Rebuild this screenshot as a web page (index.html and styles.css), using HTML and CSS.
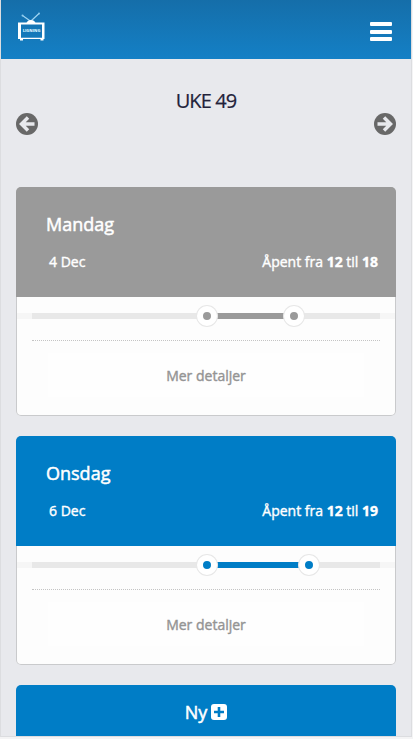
FILE: index.html
```
<!DOCTYPE html>
<html lang="no">
<head>
    <meta charset="UTF-8">
    <meta name="viewport" content="width=device-width, initial-scale=1.0">
    <title>Uke 49</title>
    <link rel="stylesheet" href="styles.css">
</head>
<body>
    <div class="screen">
        <header class="navbar">
            <svg class="logo" width="28" height="30" viewBox="0 0 28 30">
                <path d="M5.500 3.500l8.500 6M22 1.500l-7.500 7" fill="none" stroke="#9fd4f2" stroke-width="1.2"/>
                <circle cx="5.500" cy="3.500" r="1" fill="#8ccbee"/>
                <circle cx="22" cy="1.500" r="1" fill="#8ccbee"/>
                <path d="M9.500 11c1-4 8-4 9 0z" fill="#fff"/>
                <path fill="#fff" fill-rule="evenodd" d="M1 10.500h26.500V27h-1v1.500h-3V27H6v1.500H3V27H1zM4 12.500V25.800h21V12.500z"/>
            </svg>
            <span class="logo-text">LIGNING</span>
            <button class="menu" aria-label="Meny"><span></span><span></span><span></span></button>
        </header>

        <div class="week">
            <button class="arrow" aria-label="Forrige uke">
                <svg width="22" height="22" viewBox="0 0 22 22">
                    <circle cx="11" cy="11" r="11" fill="#686868"/>
                    <path d="M12 4.500L5.500 11l6.500 6.500M6 11h12.500" fill="none" stroke="#e8e9ed" stroke-width="3.500"/>
                </svg>
            </button>
            <h1>UKE 49</h1>
            <button class="arrow" aria-label="Neste uke">
                <svg width="22" height="22" viewBox="0 0 22 22">
                    <circle cx="11" cy="11" r="11" fill="#686868"/>
                    <path d="M10 4.500L16.500 11 10 17.500M16 11H3.500" fill="none" stroke="#e8e9ed" stroke-width="3.500"/>
                </svg>
            </button>
        </div>

        <div class="card closed">
            <div class="card-head">
                <h2>Mandag</h2>
                <div class="card-info">
                    <span>4 Dec</span>
                    <span>Åpent fra <b>12</b> til <b>18</b></span>
                </div>
            </div>
            <div class="card-body">
                <div class="slider">
                    <div class="track">
                        <div class="range" style="left: 50%; width: 25%"></div>
                        <div class="handle" style="left: 50%"></div>
                        <div class="handle" style="left: 75%"></div>
                    </div>
                </div>
                <button class="details">Mer detaljer</button>
            </div>
        </div>

        <div class="card">
            <div class="card-head">
                <h2>Onsdag</h2>
                <div class="card-info">
                    <span>6 Dec</span>
                    <span>Åpent fra <b>12</b> til <b>19</b></span>
                </div>
            </div>
            <div class="card-body">
                <div class="slider">
                    <div class="track">
                        <div class="range" style="left: 50%; width: 29.167%"></div>
                        <div class="handle" style="left: 50%"></div>
                        <div class="handle" style="left: 79.167%"></div>
                    </div>
                </div>
                <button class="details">Mer detaljer</button>
            </div>
        </div>

        <button class="new">
            Ny
            <svg width="16" height="16" viewBox="0 0 16 16">
                <rect width="16" height="16" rx="3" fill="#fff"/>
                <path d="M8 3v10M3 8h10" stroke="#007dc6" stroke-width="2.600"/>
            </svg>
        </button>
    </div>
</body>
</html>
```
FILE: styles.css
```
* {
    box-sizing: border-box;
}
body {
    margin: 0;
    height: 739px;
    overflow: hidden;
    background: #f4f4f5;
    font-family: "Open Sans", sans-serif;
}
button {
    padding: 0;
    border: none;
    background: none;
    font-family: inherit;
    cursor: pointer;
}
h1, h2 {
    margin: 0;
    font-weight: 400;
}
.screen {
    width: 410px;
    height: 736px;
    margin-left: 1px;
    overflow: hidden;
    background: #e8e9ed;
    box-shadow: 0 0 0 1px #dcdde0;
}
.navbar {
    position: relative;
    display: flex;
    justify-content: space-between;
    height: 59px;
    padding: 12px 19px 0 16px;
    background: linear-gradient(#156ea9, #1480c6);
}
.logo-text {
    position: absolute;
    top: 27px;
    left: 21px;
    width: 19px;
    color: #d5effc;
    font-size: 4px;
    font-weight: 800;
    line-height: 8px;
    text-align: center;
}
.menu {
    display: flex;
    flex-direction: column;
    justify-content: space-between;
    width: 22px;
    height: 19px;
    margin-top: 10px;
}
.menu span {
    height: 4px;
    border-radius: 1px;
    background: #fff;
}
.week {
    display: flex;
    justify-content: space-between;
    height: 128px;
    padding: 27px 15px 0;
}
.week h1 {
    color: #22223a;
    font-size: 20px;
    line-height: 30px;
    letter-spacing: -0.9px;
    -webkit-text-stroke: 0.2px #22223a;
}
.arrow {
    width: 22px;
    height: 22px;
    margin-top: 27px;
}
.arrow svg {
    display: block;
}
.card {
    height: 229px;
    margin: 0 15px 20px;
    border-radius: 5px;
    background: #fdfdfd;
    box-shadow: inset 0 0 0 1px #c9cacc;
    color: #007dc6;
}
.card.closed {
    color: #9a9a9a;
}
.card-head {
    height: 110px;
    padding: 24px 18px 0 30px;
    border-radius: 5px 5px 0 0;
    background: currentColor;
}
.card-head h2 {
    color: #fff;
    font-size: 18px;
    line-height: 26px;
    -webkit-text-stroke: 0.5px #fff;
}
.card-info {
    display: flex;
    justify-content: space-between;
    margin-top: 15px;
    padding-left: 3px;
    color: #fff;
    font-size: 14px;
    line-height: 20px;
    -webkit-text-stroke: 0.4px #fff;
}
.card-body {
    padding: 0 1px;
}
.slider {
    height: 44px;
    padding-top: 16px;
    margin: 0 15px;
    border-bottom: 1px dotted #c4c4c4;
}
.track {
    position: relative;
    height: 6px;
    background: #e8e8e8;
    box-shadow: -15px 0 0 #f6f6f6, 15px 0 0 #f6f6f6;
}
.range {
    position: absolute;
    height: 6px;
    background: currentColor;
}
.handle {
    position: absolute;
    top: -7px;
    width: 20px;
    height: 20px;
    margin-left: -9px;
    border: 6px solid #fff;
    border-radius: 50%;
    background: currentColor;
    box-shadow: 0 0 0 1px #e7e7e7;
}
.details {
    display: block;
    width: 316px;
    height: 44px;
    margin: 12px auto 0;
    background: #fefefe;
    color: #949494;
    font-size: 14px;
    -webkit-text-stroke: 0.4px #949494;
}
.new {
    display: flex;
    align-items: center;
    justify-content: center;
    gap: 4px;
    width: 380px;
    height: 54px;
    margin: 0 15px;
    border-radius: 5px 5px 0 0;
    background: #007dc6;
    color: #fff;
    font-size: 18px;
    -webkit-text-stroke: 0.5px #fff;
}
```
